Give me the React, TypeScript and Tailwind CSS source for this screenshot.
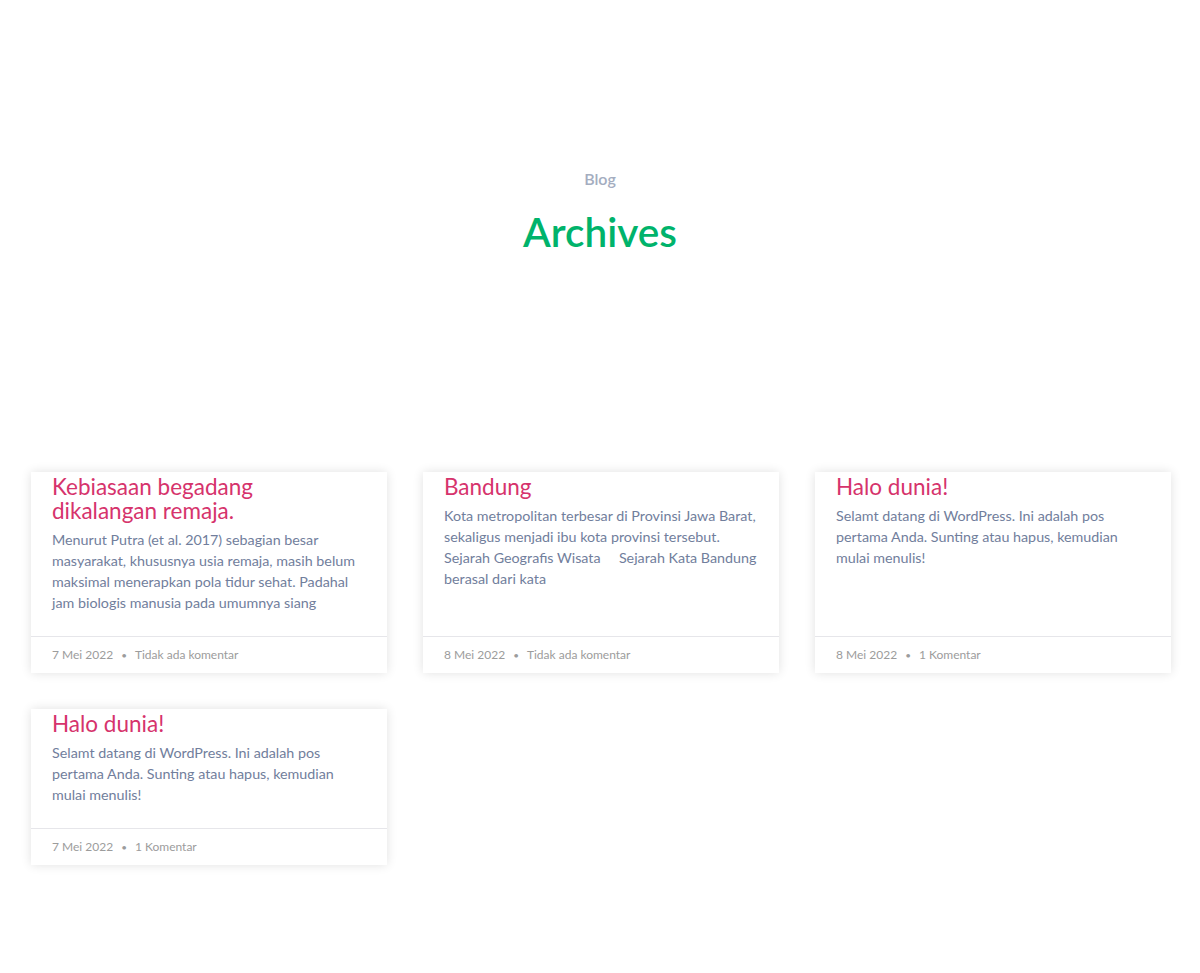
import React from "react";

type Post = { title: string; excerpt: string; date: string; comments: string };

const row1: Post[] = [
  {
    title: "Kebiasaan begadang dikalangan remaja.",
    excerpt:
      "Menurut Putra (et al. 2017) sebagian besar masyarakat, khususnya usia remaja, masih belum maksimal menerapkan pola tidur sehat. Padahal jam biologis manusia pada umumnya siang",
    date: "7 Mei 2022",
    comments: "Tidak ada komentar",
  },
  {
    title: "Bandung",
    excerpt:
      "Kota metropolitan terbesar di Provinsi Jawa Barat, sekaligus menjadi ibu kota provinsi tersebut. Sejarah Geografis Wisata \u00a0\u00a0\u00a0 Sejarah Kata Bandung berasal dari kata",
    date: "8 Mei 2022",
    comments: "Tidak ada komentar",
  },
  {
    title: "Halo dunia!",
    excerpt:
      "Selamt datang di WordPress. Ini adalah pos pertama Anda. Sunting atau hapus, kemudian mulai menulis!",
    date: "8 Mei 2022",
    comments: "1 Komentar",
  },
];

const row2: Post[] = [
  {
    title: "Halo dunia!",
    excerpt:
      "Selamt datang di WordPress. Ini adalah pos pertama Anda. Sunting atau hapus, kemudian mulai menulis!",
    date: "7 Mei 2022",
    comments: "1 Komentar",
  },
];

function Card({ p }: { p: Post }) {
  return (
    <article className="flex flex-col bg-white shadow-[0_0_10px_rgba(0,0,0,0.12)]">
      <div className="flex-1 px-[21px] pt-[3px] pb-[23px]">
        <h2 className="pr-[30px] text-[22.5px] leading-[24px] font-normal text-[#d6336c]">{p.title}</h2>
        <p className="mt-[6px] text-[14.3px] leading-[21px] text-[#717e9c]">{p.excerpt}</p>
      </div>
      <div className="border-t border-[#e6e6ea] px-[21px] h-[37px] flex items-center text-[12px] text-[#9c9c9c]">
        <span>{p.date}</span>
        <span className="mx-[8px] text-[10px]">•</span>
        <span>{p.comments}</span>
      </div>
    </article>
  );
}

export default function App() {
  return (
    <div
      className="min-h-[973px] bg-white"
      style={{ fontFamily: '"Segoe UI", Lato, "Noto Sans", sans-serif' }}
    >
      <header className="pt-[168px] text-center">
        <div className="text-[16px] leading-[22px] font-semibold text-[#a4adbf]">Blog</div>
        <h1 className="mt-[18px] text-[40.5px] leading-[48px] font-semibold text-[#00b36b]">Archives</h1>
      </header>
      <main className="mt-[216px] pl-[31px] w-[1171px] flex flex-col gap-[36px]">
        <div className="grid grid-cols-3 gap-[36px]">
          {row1.map((p, i) => (
            <Card key={i} p={p} />
          ))}
        </div>
        <div className="grid grid-cols-3 gap-[36px]">
          {row2.map((p, i) => (
            <Card key={i} p={p} />
          ))}
        </div>
      </main>
    </div>
  );
}
